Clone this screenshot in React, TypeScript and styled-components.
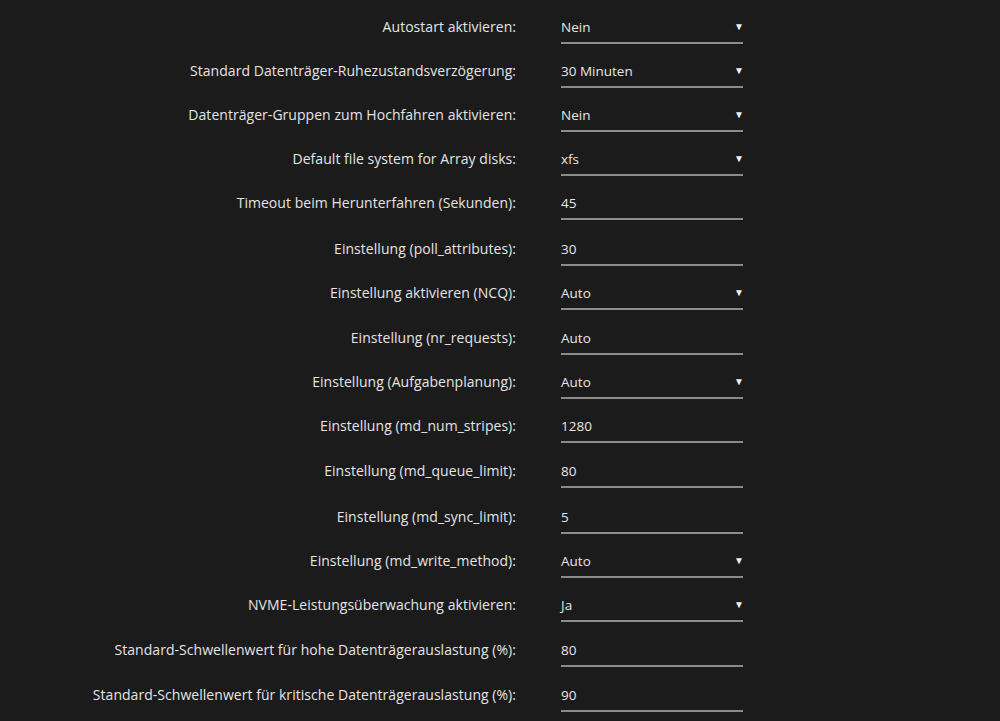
import React from "react";
import styled, { createGlobalStyle } from "styled-components";

const GlobalStyle = createGlobalStyle`
  html, body {
    margin: 0;
    padding: 0;
    background: #1c1b1c;
  }
  body {
    font-family: "Open Sans", "Noto Sans", sans-serif;
    color: #e4e4e4;
  }
`;

const Page = styled.div`
  width: 1000px;
  height: 721px;
  overflow: hidden;
  padding-top: 4px;
  box-sizing: border-box;
`;

const Form = styled.div`
  display: grid;
  grid-template-columns: 516px 182px;
  column-gap: 45px;
`;

const Label = styled.div<{ $h: number }>`
  height: ${(p) => p.$h}px;
  display: flex;
  align-items: flex-start;
  justify-content: flex-end;
  padding-top: 13px;
  box-sizing: border-box;
  font-size: 14px;
  line-height: 20px;
  letter-spacing: 0.04px;
  color: #e4e4e4;
  white-space: nowrap;
`;

const Field = styled.div<{ $h: number }>`
  height: ${(p) => p.$h}px;
  padding-top: 13px;
  box-sizing: border-box;
`;

const Control = styled.div`
  position: relative;
  height: 25px;
  border-bottom: 2px solid #8c8c8c;
  font-size: 13.5px;
  line-height: 20px;
  color: #e6e6e6;
`;

const Arrow = styled.span`
  position: absolute;
  right: -1px;
  top: 0;
  font-size: 10px;
  line-height: 19px;
  color: #f0f0f0;
`;

type Row = { label: string; value: string; select?: boolean; h: number };

const rows: Row[] = [
  { label: "Autostart aktivieren:", value: "Nein", select: true, h: 44 },
  { label: "Standard Datenträger-Ruhezustandsverzögerung:", value: "30 Minuten", select: true, h: 44 },
  { label: "Datenträger-Gruppen zum Hochfahren aktivieren:", value: "Nein", select: true, h: 44 },
  { label: "Default file system for Array disks:", value: "xfs", select: true, h: 44 },
  { label: "Timeout beim Herunterfahren (Sekunden):", value: "45", h: 46 },
  { label: "Einstellung (poll_attributes):", value: "30", h: 44 },
  { label: "Einstellung aktivieren (NCQ):", value: "Auto", select: true, h: 45 },
  { label: "Einstellung (nr_requests):", value: "Auto", h: 44 },
  { label: "Einstellung (Aufgabenplanung):", value: "Auto", select: true, h: 44 },
  { label: "Einstellung (md_num_stripes):", value: "1280", h: 45 },
  { label: "Einstellung (md_queue_limit):", value: "80", h: 46 },
  { label: "Einstellung (md_sync_limit):", value: "5", h: 44 },
  { label: "Einstellung (md_write_method):", value: "Auto", select: true, h: 44 },
  { label: "NVME-Leistungsüberwachung aktivieren:", value: "Ja", select: true, h: 45 },
  { label: "Standard-Schwellenwert für hohe Datenträgerauslastung (%):", value: "80", h: 45 },
  { label: "Standard-Schwellenwert für kritische Datenträgerauslastung (%):", value: "90", h: 45 },
];

export default function App() {
  return (
    <Page>
      <GlobalStyle />
      <Form>
        {rows.map((r) => (
          <React.Fragment key={r.label}>
            <Label $h={r.h}>{r.label}</Label>
            <Field $h={r.h}>
              <Control>
                {r.value}
                {r.select && <Arrow>▼</Arrow>}
              </Control>
            </Field>
          </React.Fragment>
        ))}
      </Form>
    </Page>
  );
}
